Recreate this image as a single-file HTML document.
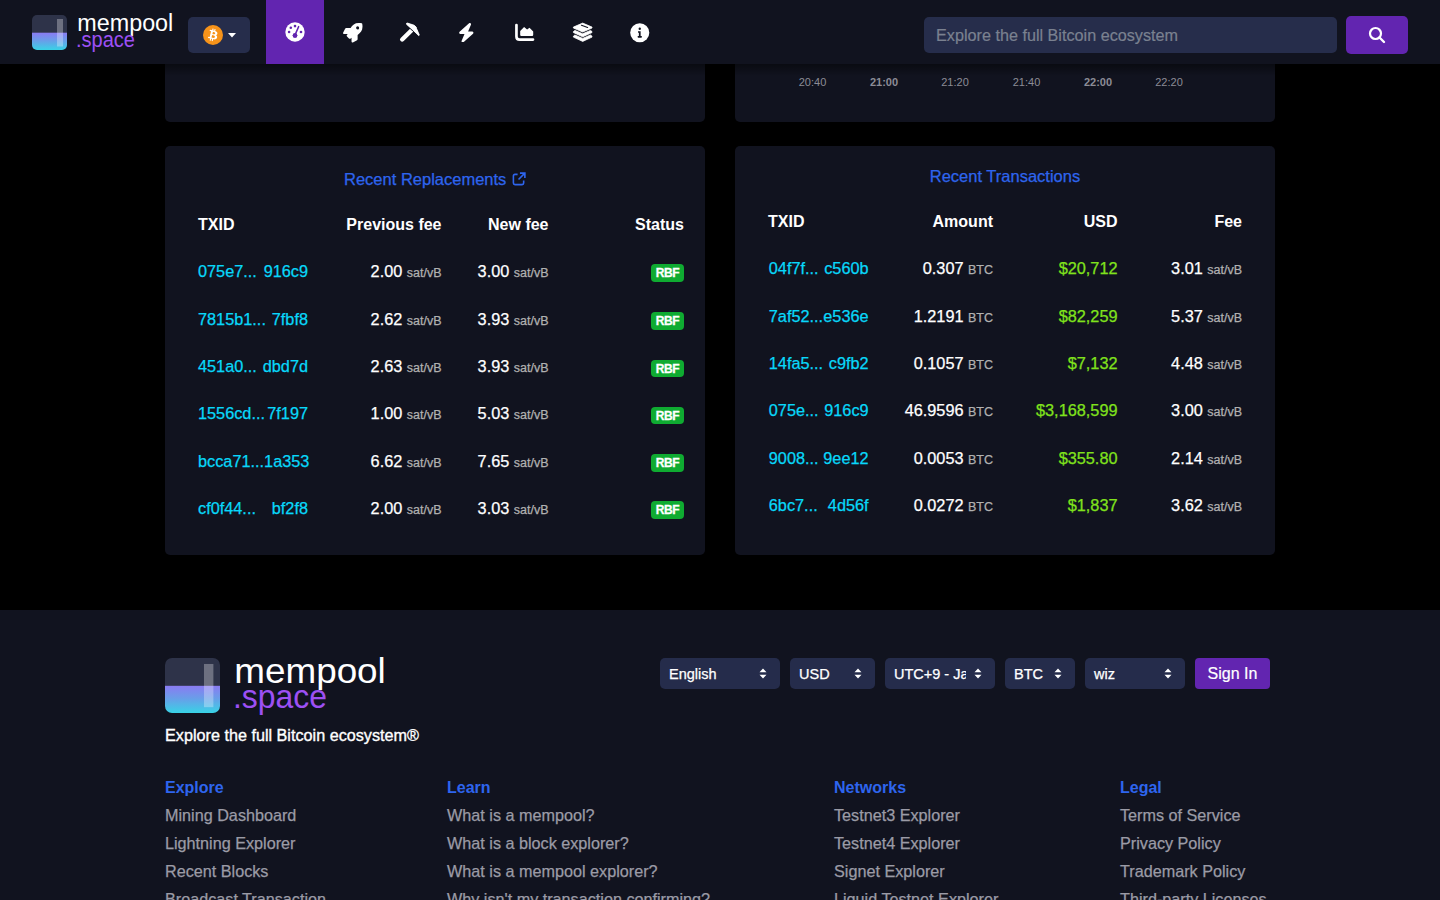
<!DOCTYPE html>
<html><head><meta charset="utf-8">
<style>
*{box-sizing:border-box;margin:0;padding:0}
html,body{width:1440px;height:900px;overflow:hidden;background:#000;font-family:"Liberation Sans",sans-serif;color:#fff}
.abs{position:absolute}
#hdr{position:absolute;left:0;top:0;width:1440px;height:64px;background:#11131f;z-index:5}
#hdrshadow{position:absolute;left:0;top:64px;width:1440px;height:12px;background:linear-gradient(rgba(0,0,0,.45),rgba(0,0,0,0));z-index:4}
.card{position:absolute;background:#11131f;border-radius:5px}
.title{position:absolute;left:0;right:0;text-align:center;color:#2e65ee;font-size:16.5px}
.th{position:absolute;font-weight:700;font-size:16px;white-space:nowrap}
.r{text-align:right}
.td{position:absolute;font-size:16.3px;white-space:nowrap}
.lnk{color:#08d8fa}
.u{color:#b1b1b1;font-size:12.5px;margin-left:1px}
.grn{color:#80e21c}
.td{line-height:20px}
.td,.title,.fl,.sel{-webkit-text-stroke:0.25px currentColor}
.txid{display:flex;justify-content:space-between}
.rbf{position:absolute;width:33px;height:17.5px;background:#0fab31;border-radius:4px;color:#fff;font-weight:700;font-size:12px;line-height:18px;text-align:center;letter-spacing:-0.4px;-webkit-text-stroke:0.3px #fff}
#footer{position:absolute;left:0;top:610px;width:1440px;height:290px;background:#11131f}
.sel{position:absolute;top:48px;height:31px;background:#252c4b;border-radius:5px;font-size:14.5px;line-height:33px;padding-left:9px;color:#fff;white-space:nowrap;overflow:hidden}
.fh{position:absolute;color:#2e65ee;font-weight:700;font-size:16px}
.fl{position:absolute;color:#9b9ba6;font-size:16.2px;white-space:nowrap}
.axis{position:absolute;top:76px;font-size:11px;color:#8c8c96}
</style></head><body>
<div id="hdr">
  <svg class="abs" style="left:32px;top:15px" width="35" height="35" viewBox="0 0 35 35">
    <defs>
      <linearGradient id="lg1" x1="0" y1="0" x2="0" y2="1"><stop offset="0" stop-color="#8a7bf2"/><stop offset="0.45" stop-color="#6a9de9"/><stop offset="1" stop-color="#38d3e6"/></linearGradient>
      <clipPath id="cp1"><rect x="0" y="0" width="35" height="35" rx="5"/></clipPath>
    </defs>
    <g clip-path="url(#cp1)">
      <rect x="0" y="0" width="35" height="18" fill="#2e3349"/>
      <rect x="0" y="17.7" width="35" height="17.3" fill="url(#lg1)"/>
      <rect x="25" y="4" width="6" height="27.5" fill="#fff" opacity="0.3"/>
    </g>
  </svg>
  <svg class="abs" style="left:75px;top:10px" width="110" height="45">
    <text x="2.3" y="20.6" font-family="Liberation Sans" font-size="23" fill="#fff" textLength="96" lengthAdjust="spacingAndGlyphs">mempool</text>
    <text x="1" y="36.8" font-family="Liberation Sans" font-size="21.5" fill="#9d50f4" textLength="59" lengthAdjust="spacingAndGlyphs">.space</text>
  </svg>
  <div class="abs" style="left:188px;top:17px;width:62px;height:36px;background:#262d4b;border-radius:5px">
    <svg class="abs" style="left:15px;top:8px" width="20" height="20" viewBox="0 0 64 64">
      <circle cx="32" cy="32" r="32" fill="#f7931a"/>
      <path fill="#fff" d="M46.11 27.441c.636-4.258-2.606-6.547-7.039-8.074l1.438-5.768-3.512-.875-1.4 5.616c-.923-.23-1.871-.447-2.813-.662l1.41-5.653-3.51-.875-1.439 5.766c-.764-.174-1.514-.346-2.242-.527l.004-.018-4.842-1.209-.934 3.75s2.605.597 2.55.634c1.422.355 1.679 1.296 1.636 2.042l-1.638 6.571c.098.025.225.061.365.117l-.371-.092-2.297 9.205c-.174.432-.615 1.08-1.609.834.035.051-2.552-.637-2.552-.637l-1.743 4.019 4.569 1.139c.85.213 1.683.436 2.503.646l-1.453 5.834 3.507.875 1.439-5.772c.958.26 1.888.5 2.798.726l-1.434 5.745 3.511.875 1.453-5.823c5.987 1.133 10.489.676 12.384-4.739 1.527-4.36-.076-6.875-3.226-8.515 2.294-.529 4.022-2.038 4.483-5.155zM38.086 38.693c-1.085 4.36-8.426 2.003-10.806 1.412l1.928-7.729c2.38.594 10.012 1.77 8.878 6.317zm1.086-11.315c-.99 3.966-7.1 1.951-9.082 1.457l1.748-7.01c1.982.494 8.182 1.416 7.334 5.553z"/>
    </svg>
    <svg class="abs" style="left:40px;top:16px" width="8" height="5" viewBox="0 0 8 5"><path d="M0 0H8L4 4.5Z" fill="#fff"/></svg>
  </div>
  <div class="abs" style="left:266px;top:0;width:58px;height:64px;background:#6225b0"></div>
  
  <svg class="abs" style="left:284.5px;top:22px" width="20" height="20" viewBox="0 0 20 20">
    <circle cx="10" cy="10" r="9.7" fill="#fff"/>
    <circle cx="10" cy="13.5" r="2.3" fill="#6225b0"/>
    <circle cx="10" cy="13.5" r="2.3" fill="#6225b0"/>
    <path d="M10 13L13.6 4.7" stroke="#6225b0" stroke-width="1.6" stroke-linecap="round"/>
    <circle cx="10" cy="4.1" r="1.3" fill="#6225b0"/>
    <circle cx="5.8" cy="5.8" r="1.3" fill="#6225b0"/>
    <circle cx="4.1" cy="10" r="1.3" fill="#6225b0"/>
    <circle cx="16" cy="10" r="1.3" fill="#6225b0"/>
  </svg>
  <svg class="abs" style="left:343px;top:23px" width="19.5" height="19.5" viewBox="0 0 512 512"><path fill="#fff" d="M505.12 19.09c-1.19-5.53-6.66-11-12.21-12.19C460.72 0 435.51 0 410.41 0 307.18 0 245.27 55.2 199.05 128H94.84c-16.35.02-35.56 11.88-42.89 26.48L2.52 253.3A28.4 28.4 0 0 0 0 264a24 24 0 0 0 24.01 24h103.8l-22.47 22.47c-11.37 11.36-13 32.26 0 45.25l50.9 50.91c11.16 11.19 32.16 13.16 45.28 0l22.47-22.47V488a24 24 0 0 0 24 24 28.56 28.56 0 0 0 10.71-2.52l98.73-49.39c14.63-7.3 26.51-26.5 26.51-42.86V312.8c72.6-46.31 128.03-108.41 128.03-211.1.01-25.2.01-50.4-6.95-82.61zM384.04 168A40 40 0 1 1 424.05 128a40.02 40.02 0 0 1-40.01 40z"/></svg>
  <svg class="abs" style="left:396px;top:19px" width="28" height="27" viewBox="0 0 28 27">
    <path d="M6.2 20.5L15.6 11.2" stroke="#fff" stroke-width="4.4" stroke-linecap="round"/>
    <path d="M9.9 4.5L11.4 3.6L18 5.85L20.4 7.8L21 9.6L24 16.2L22.8 17.4L16.8 11.4L10.2 5.7Z" fill="#fff" stroke="#11131f" stroke-width="1.3" stroke-linejoin="round"/>
    <path d="M10.5 4.4L11.4 4.1L18 6.2L20.1 8L20.6 9.7L23.3 16L22.8 16.6L16.8 10.9L10.5 5.2Z" fill="#fff" stroke="#fff" stroke-width="0.9" stroke-linejoin="round"/>
  </svg>
  <svg class="abs" style="left:458px;top:22.8px" width="16.6" height="19.5" preserveAspectRatio="none" viewBox="0 0 448 512"><path fill="#fff" d="M349.4 44.6c5.9-13.7 1.5-29.7-10.6-38.5s-28.6-8-39.9 1.8l-256 224c-10 8.8-13.6 22.9-8.9 35.3S50.7 288 64 288H175.5L98.6 467.4c-5.9 13.7-1.5 29.7 10.6 38.5s28.6 8 39.9-1.8l256-224c10-8.8 13.6-22.9 8.9-35.3s-16.6-20.7-30-20.7H272.5L349.4 44.6z"/></svg>
  <svg class="abs" style="left:510px;top:19px" width="28" height="27" viewBox="0 0 28 27">
    <path d="M6.45 6.1V17.4Q6.45 20.55 9.6 20.55H23" stroke="#fff" stroke-width="2.7" fill="none" stroke-linecap="round"/>
    <path d="M10.2 12L14.1 7.9L17.1 10.6L19.5 8.8L23.2 12.5V16Q23.2 17.1 22.1 17.1H11.3Q10.2 17.1 10.2 16Z" fill="#fff"/>
  </svg>
  <svg class="abs" style="left:568px;top:19px" width="28" height="27" viewBox="0 0 28 27">
    <path d="M5.4 8.1L14.7 4.1L24 8.1V9L14.7 13L5.4 9Z" fill="#fff" stroke="#fff" stroke-width="0.8" stroke-linejoin="round"/>
    <path d="M13.5 6.3L19.6 8.5" stroke="#11131f" stroke-width="1.2" stroke-linecap="round"/>
    <path d="M5.4 12.6L6.9 11.4L14.7 14.8L22.5 11.4L24 12.6V13.5L14.7 17.8L5.4 13.5Z" fill="#fff" stroke="#fff" stroke-width="0.8" stroke-linejoin="round"/>
    <path d="M5.4 17.2L6.9 16L14.7 19.4L22.5 16L24 17.2V18.1L14.7 22.4L5.4 18.1Z" fill="#fff" stroke="#fff" stroke-width="0.8" stroke-linejoin="round"/>
  </svg>
  <svg class="abs" style="left:630px;top:23px" width="19.5" height="19.5" viewBox="0 0 20 20">
    <circle cx="10" cy="10" r="9.8" fill="#fff"/>
    <circle cx="10" cy="5.9" r="1.2" fill="#11131f"/>
    <path d="M8.2 8.5H10.9V13.4H12.1V14.6Q12.1 15 11.6 15H8.5Q7.9 15 7.9 14.6V13.4H9.1V9.9H8.5Q8.2 9.9 8.2 9.5Z" fill="#11131f"/>
  </svg>

  <div class="abs" style="left:924px;top:17px;width:413px;height:36px;background:#262d4b;border-radius:5px;color:#7a8190;font-size:16.2px;line-height:36px;padding-left:12px;-webkit-text-stroke:0.2px #7a8190">Explore the full Bitcoin ecosystem</div>
  <div class="abs" style="left:1346px;top:16px;width:62px;height:38px;background:#6225b0;border-radius:5px">
    <svg class="abs" style="left:0;top:0" width="62" height="38" viewBox="0 0 62 38"><circle cx="29.5" cy="17.5" r="5.5" fill="none" stroke="#fff" stroke-width="2.2"/><path d="M33.5 21.5L38 26" stroke="#fff" stroke-width="2.4" stroke-linecap="round"/></svg>
  </div>
</div>
<div id="hdrshadow"></div>

<!-- top cards (partially visible) -->
<div class="card" style="left:165px;top:-20px;width:540px;height:142px"></div>
<div class="card" style="left:735px;top:-20px;width:540px;height:142px"></div>

<!-- middle cards -->
<div class="card" style="left:165px;top:146px;width:540px;height:409px"></div>
<div class="card" style="left:735px;top:146px;width:540px;height:409px"></div>

<div class="axis" style="left:782.5px;width:60px;text-align:center;">20:40</div>
<div class="axis" style="left:854px;width:60px;text-align:center;font-weight:700;">21:00</div>
<div class="axis" style="left:925px;width:60px;text-align:center;">21:20</div>
<div class="axis" style="left:996.5px;width:60px;text-align:center;">21:40</div>
<div class="axis" style="left:1068px;width:60px;text-align:center;font-weight:700;">22:00</div>
<div class="axis" style="left:1139px;width:60px;text-align:center;">22:20</div>
<div class="title" style="left:165px;width:540px;top:168.5px;line-height:20px">Recent Replacements <svg width="14" height="14" viewBox="0 0 15 15" style="vertical-align:-1px;margin-left:1px"><path d="M6 2.5H3.2Q1.5 2.5 1.5 4.2V11.8Q1.5 13.5 3.2 13.5H10.8Q12.5 13.5 12.5 11.8V9" fill="none" stroke="#2e65ee" stroke-width="1.7"/><path d="M8.5 1.2H13.8V6.5M13.5 1.5L7 8" fill="none" stroke="#2e65ee" stroke-width="1.7"/></svg></div>
<div class="th" style="left:198px;top:215.0px;line-height:20px">TXID</div>
<div class="th r" style="right:998.5px;top:215.0px;line-height:20px">Previous fee</div>
<div class="th r" style="right:891.5px;top:215.0px;line-height:20px">New fee</div>
<div class="th r" style="right:756px;top:215.0px;line-height:20px">Status</div>
<div class="td lnk txid" style="left:198px;top:260.8px;width:110px"><span>075e7...</span><span>916c9</span></div>
<div class="td r " style="right:998.5px;top:260.8px">2.00<span class="u"> sat/vB</span></div>
<div class="td r " style="right:891.5px;top:260.8px">3.00<span class="u"> sat/vB</span></div>
<div class="rbf" style="left:651px;top:264.0px">RBF</div>
<div class="td lnk txid" style="left:198px;top:308.8px;width:110px"><span>7815b1...</span><span>7fbf8</span></div>
<div class="td r " style="right:998.5px;top:308.8px">2.62<span class="u"> sat/vB</span></div>
<div class="td r " style="right:891.5px;top:308.8px">3.93<span class="u"> sat/vB</span></div>
<div class="rbf" style="left:651px;top:312.0px">RBF</div>
<div class="td lnk txid" style="left:198px;top:356.3px;width:110px"><span>451a0...</span><span>dbd7d</span></div>
<div class="td r " style="right:998.5px;top:356.3px">2.63<span class="u"> sat/vB</span></div>
<div class="td r " style="right:891.5px;top:356.3px">3.93<span class="u"> sat/vB</span></div>
<div class="rbf" style="left:651px;top:359.5px">RBF</div>
<div class="td lnk txid" style="left:198px;top:403.3px;width:110px"><span>1556cd...</span><span>7f197</span></div>
<div class="td r " style="right:998.5px;top:403.3px">1.00<span class="u"> sat/vB</span></div>
<div class="td r " style="right:891.5px;top:403.3px">5.03<span class="u"> sat/vB</span></div>
<div class="rbf" style="left:651px;top:406.5px">RBF</div>
<div class="td lnk txid" style="left:198px;top:450.8px;width:110px"><span>bcca71...</span><span>1a353</span></div>
<div class="td r " style="right:998.5px;top:450.8px">6.62<span class="u"> sat/vB</span></div>
<div class="td r " style="right:891.5px;top:450.8px">7.65<span class="u"> sat/vB</span></div>
<div class="rbf" style="left:651px;top:454.0px">RBF</div>
<div class="td lnk txid" style="left:198px;top:497.8px;width:110px"><span>cf0f44...</span><span>bf2f8</span></div>
<div class="td r " style="right:998.5px;top:497.8px">2.00<span class="u"> sat/vB</span></div>
<div class="td r " style="right:891.5px;top:497.8px">3.03<span class="u"> sat/vB</span></div>
<div class="rbf" style="left:651px;top:501.0px">RBF</div>
<div class="title" style="left:735px;width:540px;top:165.8px;line-height:20px">Recent Transactions</div>
<div class="th" style="left:768px;top:211.5px;line-height:20px">TXID</div>
<div class="th r" style="right:447px;top:211.5px;line-height:20px">Amount</div>
<div class="th r" style="right:322.5px;top:211.5px;line-height:20px">USD</div>
<div class="th r" style="right:198px;top:211.5px;line-height:20px">Fee</div>
<div class="td lnk txid" style="left:768.8px;top:258.3px;width:99.8px"><span>04f7f...</span><span>c560b</span></div>
<div class="td r " style="right:447px;top:258.3px">0.307<span class="u"> BTC</span></div>
<div class="td r grn" style="right:322.5px;top:258.3px">$20,712</div>
<div class="td r " style="right:198px;top:258.3px">3.01<span class="u"> sat/vB</span></div>
<div class="td lnk txid" style="left:768.8px;top:305.8px;width:99.8px"><span>7af52...</span><span>e536e</span></div>
<div class="td r " style="right:447px;top:305.8px">1.2191<span class="u"> BTC</span></div>
<div class="td r grn" style="right:322.5px;top:305.8px">$82,259</div>
<div class="td r " style="right:198px;top:305.8px">5.37<span class="u"> sat/vB</span></div>
<div class="td lnk txid" style="left:768.8px;top:353.3px;width:99.8px"><span>14fa5...</span><span>c9fb2</span></div>
<div class="td r " style="right:447px;top:353.3px">0.1057<span class="u"> BTC</span></div>
<div class="td r grn" style="right:322.5px;top:353.3px">$7,132</div>
<div class="td r " style="right:198px;top:353.3px">4.48<span class="u"> sat/vB</span></div>
<div class="td lnk txid" style="left:768.8px;top:400.3px;width:99.8px"><span>075e...</span><span>916c9</span></div>
<div class="td r " style="right:447px;top:400.3px">46.9596<span class="u"> BTC</span></div>
<div class="td r grn" style="right:322.5px;top:400.3px">$3,168,599</div>
<div class="td r " style="right:198px;top:400.3px">3.00<span class="u"> sat/vB</span></div>
<div class="td lnk txid" style="left:768.8px;top:447.8px;width:99.8px"><span>9008...</span><span>9ee12</span></div>
<div class="td r " style="right:447px;top:447.8px">0.0053<span class="u"> BTC</span></div>
<div class="td r grn" style="right:322.5px;top:447.8px">$355.80</div>
<div class="td r " style="right:198px;top:447.8px">2.14<span class="u"> sat/vB</span></div>
<div class="td lnk txid" style="left:768.8px;top:494.8px;width:99.8px"><span>6bc7...</span><span>4d56f</span></div>
<div class="td r " style="right:447px;top:494.8px">0.0272<span class="u"> BTC</span></div>
<div class="td r grn" style="right:322.5px;top:494.8px">$1,837</div>
<div class="td r " style="right:198px;top:494.8px">3.62<span class="u"> sat/vB</span></div>
<div id="footer">
  <svg class="abs" style="left:165px;top:48px" width="55" height="55" viewBox="0 0 35 35">
    <defs>
      <linearGradient id="lg2" x1="0" y1="0" x2="0" y2="1"><stop offset="0" stop-color="#8a7bf2"/><stop offset="0.45" stop-color="#6a9de9"/><stop offset="1" stop-color="#38d3e6"/></linearGradient>
      <clipPath id="cp2"><rect x="0" y="0" width="35" height="35" rx="4.5"/></clipPath>
    </defs>
    <g clip-path="url(#cp2)">
      <rect x="0" y="0" width="35" height="18" fill="#2e3349"/>
      <rect x="0" y="17.7" width="35" height="17.3" fill="url(#lg2)"/>
      <rect x="24.8" y="3.8" width="6" height="27.5" fill="#fff" opacity="0.3"/>
    </g>
  </svg>
  <svg class="abs" style="left:230px;top:40px" width="170" height="70">
    <text x="4.3" y="32.5" font-family="Liberation Sans" font-size="35" fill="#fff" textLength="151.5" lengthAdjust="spacingAndGlyphs">mempool</text>
    <text x="3" y="57.5" font-family="Liberation Sans" font-size="33" fill="#9d50f4" textLength="94" lengthAdjust="spacingAndGlyphs">.space</text>
  </svg>
  <div class="abs" style="left:165px;top:114.5px;font-size:16.2px;line-height:20px;white-space:nowrap;-webkit-text-stroke:0.35px #fff">Explore the full Bitcoin ecosystem®</div>

<div class="sel" style="left:660px;width:120px">English<svg class="abs" style="right:13px;top:10px" width="8" height="11" viewBox="0 0 8 11"><path d="M0.5 4.3L4 0.6L7.5 4.3Z M0.5 6.7L4 10.4L7.5 6.7Z" fill="#fff"/></svg></div>
<div class="sel" style="left:790px;width:85px">USD<svg class="abs" style="right:13px;top:10px" width="8" height="11" viewBox="0 0 8 11"><path d="M0.5 4.3L4 0.6L7.5 4.3Z M0.5 6.7L4 10.4L7.5 6.7Z" fill="#fff"/></svg></div>
<div class="sel" style="left:885px;width:110px"><span style="display:inline-block;width:72px;overflow:hidden;vertical-align:top">UTC+9 - Ja</span><svg class="abs" style="right:13px;top:10px" width="8" height="11" viewBox="0 0 8 11"><path d="M0.5 4.3L4 0.6L7.5 4.3Z M0.5 6.7L4 10.4L7.5 6.7Z" fill="#fff"/></svg></div>
<div class="sel" style="left:1005px;width:70px">BTC<svg class="abs" style="right:13px;top:10px" width="8" height="11" viewBox="0 0 8 11"><path d="M0.5 4.3L4 0.6L7.5 4.3Z M0.5 6.7L4 10.4L7.5 6.7Z" fill="#fff"/></svg></div>
<div class="sel" style="left:1085px;width:100px">wiz<svg class="abs" style="right:13px;top:10px" width="8" height="11" viewBox="0 0 8 11"><path d="M0.5 4.3L4 0.6L7.5 4.3Z M0.5 6.7L4 10.4L7.5 6.7Z" fill="#fff"/></svg></div>
<div class="abs" style="left:1195px;top:48px;width:75px;height:31px;background:#6225b0;border-radius:4px;font-size:16px;line-height:31px;text-align:center;-webkit-text-stroke:0.2px #fff">Sign In</div>
<div class="fh" style="left:165px;top:167.79999999999995px;line-height:20px">Explore</div>
<div class="fl" style="left:165px;top:194.75px;line-height:20px">Mining Dashboard</div>
<div class="fl" style="left:165px;top:222.85px;line-height:20px">Lightning Explorer</div>
<div class="fl" style="left:165px;top:250.95px;line-height:20px">Recent Blocks</div>
<div class="fl" style="left:165px;top:279.05px;line-height:20px">Broadcast Transaction</div>
<div class="fh" style="left:447px;top:167.79999999999995px;line-height:20px">Learn</div>
<div class="fl" style="left:447px;top:194.75px;line-height:20px">What is a mempool?</div>
<div class="fl" style="left:447px;top:222.85px;line-height:20px">What is a block explorer?</div>
<div class="fl" style="left:447px;top:250.95px;line-height:20px">What is a mempool explorer?</div>
<div class="fl" style="left:447px;top:279.05px;line-height:20px">Why isn't my transaction confirming?</div>
<div class="fh" style="left:834px;top:167.79999999999995px;line-height:20px">Networks</div>
<div class="fl" style="left:834px;top:194.75px;line-height:20px">Testnet3 Explorer</div>
<div class="fl" style="left:834px;top:222.85px;line-height:20px">Testnet4 Explorer</div>
<div class="fl" style="left:834px;top:250.95px;line-height:20px">Signet Explorer</div>
<div class="fl" style="left:834px;top:279.05px;line-height:20px">Liquid Testnet Explorer</div>
<div class="fh" style="left:1120px;top:167.79999999999995px;line-height:20px">Legal</div>
<div class="fl" style="left:1120px;top:194.75px;line-height:20px">Terms of Service</div>
<div class="fl" style="left:1120px;top:222.85px;line-height:20px">Privacy Policy</div>
<div class="fl" style="left:1120px;top:250.95px;line-height:20px">Trademark Policy</div>
<div class="fl" style="left:1120px;top:279.05px;line-height:20px">Third-party Licenses</div>
</div>
</body></html>
